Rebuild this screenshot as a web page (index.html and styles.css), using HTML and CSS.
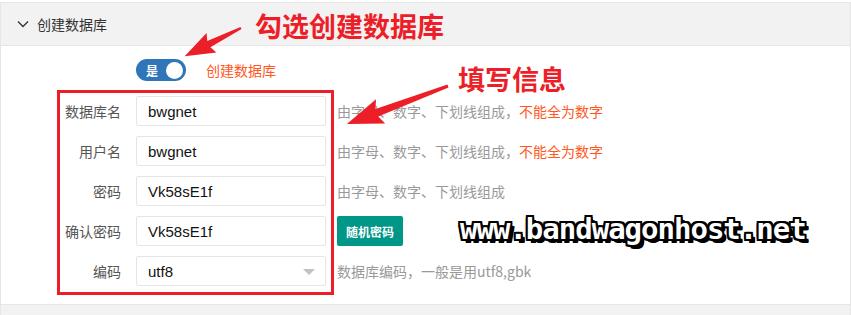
FILE: index.html
```html
<!DOCTYPE html>
<html lang="zh-CN">
<head>
  <meta charset="UTF-8" />
  <title>创建数据库</title>
  <link rel="stylesheet" href="styles.css">
</head>
<body>
  <div class="page">
    <div class="panel">
      <div class="panel-title">
        <svg class="chevron" width="12" height="8" viewBox="0 0 12 8">
          <path d="M1 1.5 L6 6.5 L11 1.5" fill="none" stroke="#333" stroke-width="1.3"/>
        </svg>
        创建数据库
      </div>
      <div class="panel-body">
        <div class="switch-row">
          <span class="switch"><em>是</em><i></i></span>
          <span class="switch-tip">创建数据库</span>
        </div>
        <div class="form">
          <div class="form-item">
            <label class="form-label">数据库名</label>
            <div class="input">bwgnet</div>
            <div class="aux">由字母、数字、下划线组成，<span class="warn">不能全为数字</span></div>
          </div>
          <div class="form-item">
            <label class="form-label">用户名</label>
            <div class="input">bwgnet</div>
            <div class="aux">由字母、数字、下划线组成，<span class="warn">不能全为数字</span></div>
          </div>
          <div class="form-item">
            <label class="form-label">密码</label>
            <div class="input">Vk58sE1f</div>
            <div class="aux">由字母、数字、下划线组成</div>
          </div>
          <div class="form-item">
            <label class="form-label">确认密码</label>
            <div class="input">Vk58sE1f</div>
            <button class="btn">随机密码</button>
          </div>
          <div class="form-item">
            <label class="form-label">编码</label>
            <div class="input select">utf8<span class="caret"></span></div>
            <div class="aux">数据库编码，一般是用utf8,gbk</div>
          </div>
        </div>
      </div>
    </div>
    <div class="panel-next"></div>

    <!-- annotations drawn over the screenshot -->
    <div class="mark-box"></div>
    <div class="note note-1">勾选创建数据库</div>
    <div class="note note-2">填写信息</div>
    <svg class="arrows" width="851" height="315" viewBox="0 0 851 315">
      <polygon transform="translate(241 28) rotate(153.4)" fill="#ec1f28"
        points="0,-1.2 36,-3.5 33,-11 63,0 33,11 36,3.5 0,1.2"/>
      <polygon transform="translate(448 86) rotate(159.4)" fill="#ec1f28"
        points="0,-1.5 76,-4 72,-13 108,0 72,13 76,4 0,1.5"/>
    </svg>
    <div class="watermark">www.bandwagonhost.net</div>
  </div>
</body>
</html>
```

FILE: styles.css
```css
body {
  margin: 0;
  font-family: "Noto Sans CJK SC", "Liberation Sans", sans-serif;
  font-size: 14px;
  color: #333;
  background: #fff;
}
.page {
  position: relative;
  width: 851px;
  height: 315px;
  padding-top: 2px;
  box-sizing: border-box;
  overflow: hidden;
}
.panel {
  border: 1px solid #e6e6e6;
}
.panel-title {
  display: flex;
  align-items: center;
  gap: 8px;
  height: 42px;
  padding-left: 16px;
  background: #f2f2f2;
  border-bottom: 1px solid #e6e6e6;
  color: #333;
}
.panel-body {
  padding: 13px 0 18px;
}
.switch-row {
  display: flex;
  align-items: center;
  height: 22px;
  padding-left: 135px;
  margin-bottom: 15px;
}
.switch {
  display: flex;
  align-items: center;
  justify-content: space-between;
  width: 50px;
  height: 22px;
  box-sizing: border-box;
  padding: 0 3px 0 10px;
  border-radius: 11px;
  background: #2f76b8;
}
.switch em {
  font-style: normal;
  font-size: 12px;
  font-weight: bold;
  color: #fff;
}
.switch i {
  width: 17px;
  height: 17px;
  border-radius: 50%;
  background: #fff;
}
.switch-tip {
  margin-left: 20px;
  color: #ff5722;
}
.form {
  display: flex;
  flex-direction: column;
  gap: 10px;
}
.form-item {
  display: flex;
  align-items: center;
  height: 30px;
}
.form-label {
  width: 120px;
  text-align: right;
  color: #555;
}
.input {
  position: relative;
  display: flex;
  align-items: center;
  width: 190px;
  height: 30px;
  box-sizing: border-box;
  margin-left: 15px;
  padding-left: 11px;
  border: 1px solid #e6e6e6;
  border-radius: 2px;
  font-family: "Liberation Sans", sans-serif;
  font-size: 15px;
  color: #111;
}
.caret {
  position: absolute;
  right: 10px;
  top: 12px;
  border-left: 6px solid transparent;
  border-right: 6px solid transparent;
  border-top: 6px solid #c2c2c2;
}
.aux {
  margin-left: 11px;
  color: #999;
}
.warn {
  color: #ff5722;
}
.btn {
  height: 30px;
  margin-left: 11px;
  padding: 0 9px;
  border: none;
  border-radius: 2px;
  background: #009688;
  color: #fff;
  font-family: "Noto Sans CJK SC", sans-serif;
  font-size: 12px;
  font-weight: bold;
}
.panel-next {
  height: 20px;
  background: #f2f2f2;
  border-left: 1px solid #e6e6e6;
  border-right: 1px solid #e6e6e6;
}
.mark-box {
  position: absolute;
  left: 57px;
  top: 90px;
  width: 277px;
  height: 205px;
  box-sizing: border-box;
  border: 3px solid #ec1f28;
}
.note {
  position: absolute;
  font-size: 27px;
  font-weight: bold;
  line-height: 32px;
  color: #ec1f28;
}
.note-1 {
  left: 255px;
  top: 10px;
}
.note-2 {
  left: 458px;
  top: 63px;
}
.arrows {
  position: absolute;
  left: 0;
  top: 0;
}
.watermark {
  position: absolute;
  left: 460px;
  top: 212px;
  font-family: "DejaVu Sans Mono", monospace;
  font-size: 29px;
  font-weight: bold;
  letter-spacing: -1px;
  color: #fff;
  text-shadow:
    2px 0 0 #000, -2px 0 0 #000, 0 2px 0 #000, 0 -2px 0 #000,
    2px 2px 0 #000, -2px -2px 0 #000, 2px -2px 0 #000, -2px 2px 0 #000,
    4px 4px 0 #000, 3px 4px 0 #000, 4px 3px 0 #000;
}
```
